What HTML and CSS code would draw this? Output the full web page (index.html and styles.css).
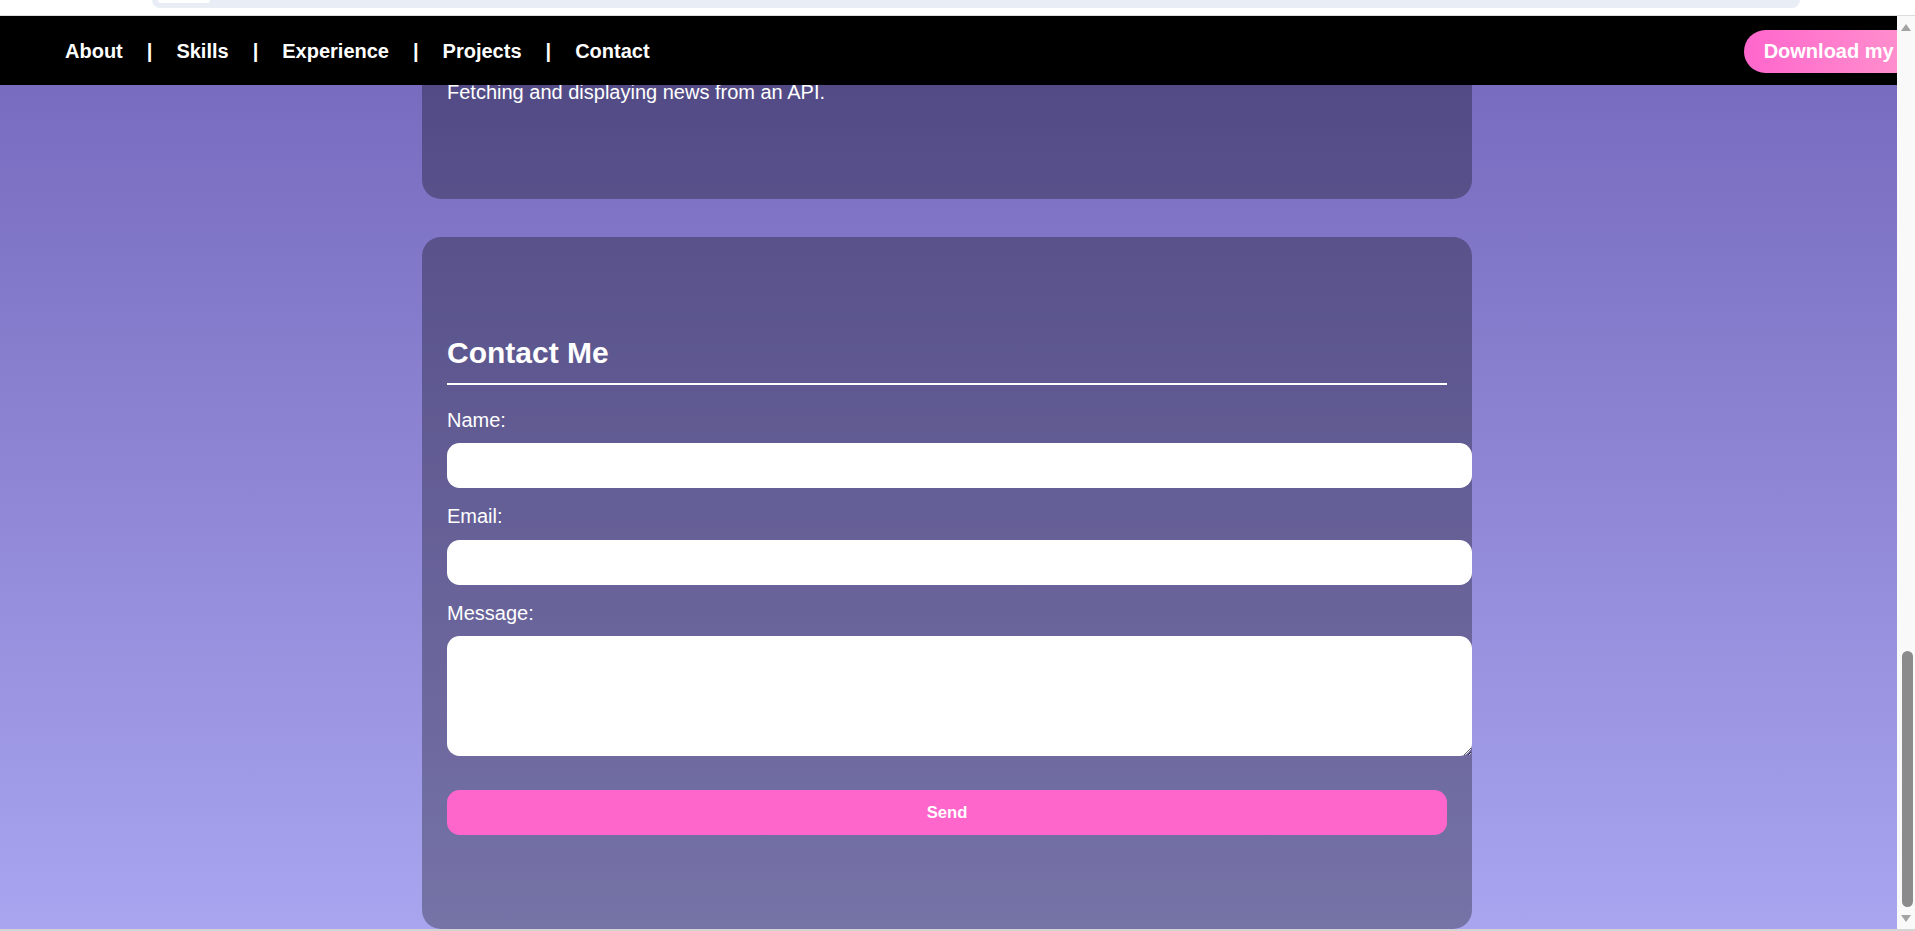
FILE: index.html
```html
<!DOCTYPE html>
<html lang="en">
<head>
<meta charset="utf-8">
<title>Portfolio – Contact</title>
<link rel="stylesheet" href="styles.css">
</head>
<body>
  <div class="chrome">
    <div class="omnibox"><div class="omnibox-chip"></div></div>
  </div>
  <div class="window">
    <div class="viewport">
      <header class="nav">
        <nav class="nav-links">
          <a href="#about">About</a>
          <span class="sep">|</span>
          <a href="#skills">Skills</a>
          <span class="sep">|</span>
          <a href="#experience">Experience</a>
          <span class="sep">|</span>
          <a href="#projects">Projects</a>
          <span class="sep">|</span>
          <a href="#contact">Contact</a>
        </nav>
        <a class="cv-button" href="#cv">Download my CV</a>
      </header>
      <main class="content">
        <section class="card card-project">
          <p>Fetching and displaying news from an API.</p>
        </section>
        <section class="card card-contact" id="contact">
          <h2>Contact Me</h2>
          <form class="contact-form">
            <label for="name">Name:</label>
            <input type="text" id="name" class="field">
            <label for="email">Email:</label>
            <input type="email" id="email" class="field">
            <label for="message">Message:</label>
            <textarea id="message" class="field field-area"></textarea>
            <button type="button" class="send">Send</button>
          </form>
        </section>
      </main>
    </div>
    <div class="scrollbar">
      <span class="arrow arrow-up"></span>
      <div class="track"><div class="thumb"></div></div>
      <span class="arrow arrow-down"></span>
    </div>
  </div>
  <div class="bottom-edge"></div>
</body>
</html>
```

FILE: styles.css
```css
* { box-sizing: border-box; }

html, body {
  margin: 0;
  padding: 0;
  height: 931px;
  overflow: hidden;
  background: #ffffff;
  font-family: "Liberation Sans", Arial, sans-serif;
}

/* fake browser chrome */
.chrome {
  height: 16px;
  background: #ffffff;
  border-bottom: 1px solid #dcdcdc;
  padding: 0 115px 0 152px;
}
.omnibox {
  height: 8px;
  background: #e9eef6;
  border-radius: 0 0 9px 9px;
  padding-left: 6px;
}
.omnibox-chip {
  width: 52px;
  height: 3px;
  background: #ffffff;
  border-radius: 0 0 4px 4px;
}

.window {
  display: flex;
  height: 913px;
}

.viewport {
  flex: 1;
  position: relative;
  overflow: hidden;
  background: linear-gradient(to bottom, #7367bb 0%, #a9a5ef 100%);
}

/* sticky navigation bar */
.nav {
  position: absolute;
  top: 0;
  left: 0;
  right: 0;
  z-index: 5;
  height: 69px;
  background: #000000;
  display: flex;
  align-items: center;
  padding-left: 65px;
}
.nav-links {
  display: flex;
  align-items: center;
  gap: 24px;
  padding-top: 1px;
}
.nav-links a,
.nav-links .sep {
  color: #ffffff;
  font-size: 20px;
  font-weight: bold;
  text-decoration: none;
  line-height: 23px;
}

.cv-button {
  margin-left: auto;
  margin-right: -50px;
  flex-shrink: 0;
  white-space: nowrap;
  color: #ffffff;
  font-size: 20px;
  font-weight: bold;
  line-height: 23px;
  text-decoration: none;
  padding: 10px 20px;
  border-radius: 22px;
  background: linear-gradient(90deg, #ff66cc 0%, #ff9acd 100%);
  position: relative;
  top: 1px;
}

/* content (scrolled) */
.content {
  padding-right: 3px;
}

.card {
  width: 1050px;
  margin: 0 auto;
  padding: 25px;
  border-radius: 19px;
  background: rgba(0, 0, 0, 0.3);
  color: #ffffff;
}

.card-project {
  padding-top: 64.5px;
  padding-bottom: 95.5px;
}
.card-project p {
  margin: 0;
  font-size: 20px;
  line-height: 23px;
}

.card-contact {
  margin-top: 38px;
  padding-top: 98.5px;
}
.card-contact h2 {
  margin: 0 0 24px;
  font-size: 30px;
  line-height: 34.5px;
  font-weight: bold;
  padding-bottom: 12.5px;
  border-bottom: 2px solid #ffffff;
}

.contact-form label {
  display: block;
  font-size: 20px;
  line-height: 23px;
  margin-bottom: 11.5px;
}

.field {
  display: block;
  width: calc(100% + 25px);
  height: 45px;
  margin: 0 0 17px;
  padding: 12.5px;
  border: none;
  border-radius: 12.5px;
  background: #ffffff;
  font-family: "Liberation Sans", Arial, sans-serif;
  font-size: 16.67px;
  outline: none;
}
.field-area {
  height: 120px;
  margin-bottom: 34px;
}

.send {
  display: block;
  width: 100%;
  height: 45px;
  margin: 0 0 69px;
  border: none;
  border-radius: 12.5px;
  background: #ff66cc;
  color: #ffffff;
  font-family: "Liberation Sans", Arial, sans-serif;
  font-size: 16.67px;
  font-weight: bold;
}

/* fake scrollbar */
.scrollbar {
  width: 18px;
  background: #f9f9f9;
  display: flex;
  flex-direction: column;
  align-items: center;
  padding: 8px 0 7px;
}
.arrow {
  width: 0;
  height: 0;
  border-left: 5px solid transparent;
  border-right: 5px solid transparent;
}
.arrow-up { border-bottom: 7px solid #a3a3a3; }
.arrow-down { border-top: 7px solid #a3a3a3; }
.track {
  flex: 1;
  width: 100%;
  display: flex;
  justify-content: center;
  align-items: flex-end;
  padding: 0 0 8px 2px;
}
.thumb {
  width: 11px;
  height: 256px;
  border-radius: 6px;
  background: #8b8b8b;
}

.bottom-edge {
  height: 2px;
  background: #d4d4d4;
}
```
